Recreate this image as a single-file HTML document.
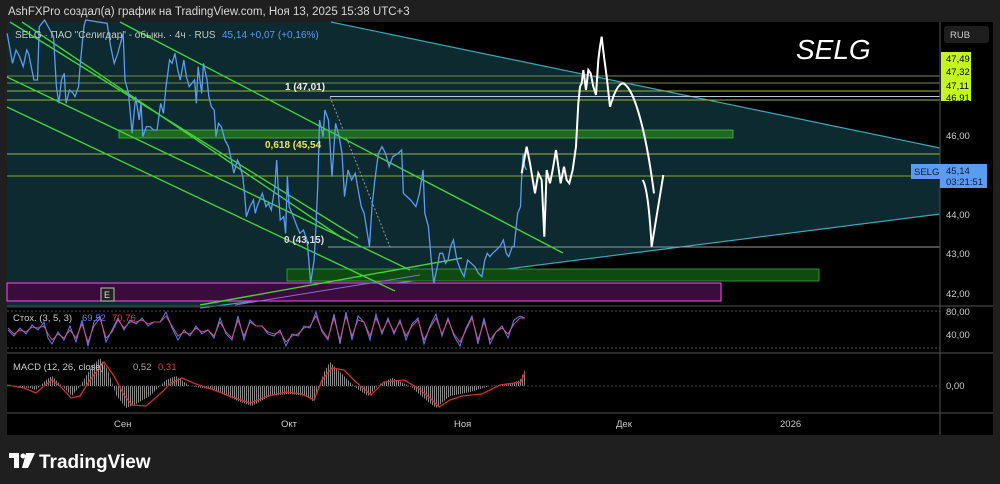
<!DOCTYPE html>
<html><head><meta charset="utf-8"><style>
html,body{margin:0;padding:0;background:#1f1f1f;width:1000px;height:484px;overflow:hidden;font-family:"Liberation Sans",sans-serif}
svg text{font-family:"Liberation Sans","DejaVu Sans",sans-serif}
</style></head><body>
<svg width="1000" height="484" viewBox="0 0 1000 484" xmlns="http://www.w3.org/2000/svg">
<rect width="1000" height="484" fill="#1f1f1f"/>
<text x="8" y="15" fill="#d8d8d8" font-size="11.5">AshFXPro создал(а) график на TradingView.com, Ноя 13, 2025 15:38 UTC+3</text>
<rect x="7" y="22" width="986" height="413" fill="#000"/>
<polygon points="7,22 331,22 940,148 940,214 200,308 7,308" fill="#0c2a2f"/>
<line x1="331" y1="22" x2="940" y2="148" stroke="#3aa7b8" stroke-width="1.2"/>
<line x1="200" y1="308" x2="940" y2="214" stroke="#3aa7b8" stroke-width="1.2"/>
<g stroke-width="1">
<line x1="7" y1="76" x2="940" y2="76" stroke="#7d8a4a"/>
<line x1="7" y1="83" x2="940" y2="83" stroke="#7d8a4a"/>
<line x1="7" y1="91" x2="940" y2="91" stroke="#9ab83a"/>
<line x1="330" y1="96.5" x2="940" y2="96.5" stroke="#b8c8d8"/>
<line x1="7" y1="100" x2="940" y2="100" stroke="#9ab83a"/>
<line x1="7" y1="154" x2="940" y2="154" stroke="#9ab83a"/>
<line x1="7" y1="176" x2="940" y2="176" stroke="#8aa83a"/>
<line x1="328" y1="247" x2="940" y2="247" stroke="#9a9a9a"/>
</g>
<line x1="330" y1="97" x2="390" y2="247" stroke="#999" stroke-dasharray="2,2"/>
<rect x="119" y="130" width="614" height="8" fill="#1f6a1f" stroke="#3fbf3f" stroke-width="0.8"/>
<rect x="287" y="269" width="532" height="12" fill="#0f4a10" stroke="#3aa83a" stroke-width="0.8"/>
<rect x="7" y="283" width="714" height="18" fill="#3a0c3c" stroke="#e040d8" stroke-width="1.2"/>
<rect x="101" y="288" width="13" height="13" fill="#222" stroke="#bbb" stroke-width="1"/>
<text x="104" y="298" fill="#ddd" font-size="9">E</text>
<g stroke="#44d238" stroke-width="1.4">
<line x1="120" y1="22" x2="563" y2="253"/>
<line x1="10" y1="22" x2="358" y2="238"/>
<line x1="22" y1="22" x2="345" y2="240"/>
<line x1="7" y1="77" x2="410" y2="270"/>
<line x1="7" y1="107" x2="395" y2="291"/>
<line x1="200" y1="305" x2="462" y2="258"/>
</g>
<line x1="235" y1="305" x2="420" y2="275" stroke="#8a6ad8" stroke-width="1"/>
<g transform="translate(0,20) scale(0.357,0.3333)">
<polyline fill="none" stroke="#5b9cf0" stroke-width="1.3" vector-effect="non-scaling-stroke" points="20,40 35,130 45,90 55,110 65,140 75,90 80,100 95,180 105,180 110,20 125,0 140,30 150,50 158,200 165,250 172,180 180,160 185,250 195,210 205,220 210,230 220,200 225,130 235,20 240,0 300,10 310,80 320,130 330,100 345,40 350,180 360,220 370,340 380,230 390,300 395,250 400,350 410,320 420,320 430,330 440,330 450,250 458,280 465,200 475,120 482,130 490,100 498,150 505,180 515,120 522,170 530,200 545,180 550,250 555,140 565,220 570,130 580,180 585,230 592,260 600,270 605,350 612,310 620,320 630,360 640,380 648,420 655,460 665,420 670,430 680,470 685,520 690,590 700,560 710,540 715,580 720,560 735,520 745,560 752,550 760,570 770,500 775,420 780,520 785,600 795,590 800,640 805,470 810,560 818,580 825,600 832,620 840,640 850,630 860,660 865,720 870,790 880,720 885,620 890,500 895,300 905,350 910,270 920,300 930,470 940,310 950,350 958,400 965,530 975,450 985,480 995,460 1005,520 1012,560 1020,580 1035,680 1042,560 1050,480 1060,400 1070,380 1080,400 1090,440 1100,410 1115,400 1125,390 1130,520 1140,530 1150,540 1165,560 1175,520 1185,450 1190,580 1200,620 1208,720 1215,790 1225,740 1232,700 1240,700 1248,730 1255,720 1262,680 1270,660 1280,720 1290,750 1300,770 1310,720 1320,730 1330,740 1340,760 1350,770 1358,720 1365,700 1372,710 1380,700 1390,690 1400,680 1410,660 1418,700 1425,710 1435,680 1440,680 1450,580 1458,560 1460,500 1465,400 1470,440 1475,450"/>
</g>
<g transform="translate(500,20) scale(0.3333)">
<path fill="none" stroke="#fff" stroke-width="2" vector-effect="non-scaling-stroke" d="M65,460 L80,380 L90,430 L105,520 L115,460 L125,480 L133,650 L140,450 L150,490 L158,450 L168,390 L175,440 L182,490 L192,440 L200,480 L208,490 L218,450 L228,380 L235,250 L240,200 L245,190 L250,150 L258,210 L265,150 L272,160 L280,200 L288,225 L295,120 L300,80 L305,50 L312,110 L320,170 L330,260 L340,230 Q355,190 370,190 Q390,200 410,260 Q440,350 462,520 M428,480 Q445,505 455,680 L490,465"/>
</g>
<text x="15" y="38" fill="#c8c8c8" font-size="10">SELG · ПАО "Селигдар" - обыкн. · 4ч · RUS</text>
<text x="222" y="38" fill="#5b9cf0" font-size="10">45,14  +0,07 (+0,16%)</text>
<text x="285" y="90" fill="#eee" font-size="10" font-weight="bold">1 (47,01)</text>
<text x="265" y="148" fill="#e8e84a" font-size="10" font-weight="bold">0,618 (45,54</text>
<text x="284" y="243" fill="#ddd" font-size="10" font-weight="bold">0 (43,15)</text>
<text x="796" y="59" fill="#fff" font-size="28" font-style="italic">SELG</text>
<g stroke="#444" stroke-width="1.2">
<line x1="7" y1="306" x2="993" y2="306"/>
<line x1="7" y1="353" x2="993" y2="353"/>
<line x1="7" y1="413" x2="993" y2="413"/>
<line x1="940" y1="22" x2="940" y2="435"/>
</g>
<line x1="7" y1="311" x2="940" y2="311" stroke="#555" stroke-dasharray="2,2"/>
<line x1="7" y1="348" x2="940" y2="348" stroke="#555" stroke-dasharray="2,2"/>
<polyline fill="none" stroke="#5b7cf0" stroke-width="1" points="8,330 14,336 20,328 26,334 32,325 38,330 44,322 48,338 52,344 58,332 64,340 70,326 76,342 82,320 88,346 94,322 100,316 106,342 112,330 118,318 124,330 130,320 136,324 142,318 148,326 154,322 160,322 166,312 172,328 178,340 184,330 190,336 196,326 202,334 208,330 214,338 220,318 226,334 232,340 238,316 244,340 250,320 256,326 262,326 268,334 274,336 280,330 286,346 292,334 298,336 304,326 310,328 316,312 322,332 328,340 334,314 340,344 346,312 352,340 358,316 364,322 370,340 376,314 382,334 388,318 394,334 400,320 406,340 412,324 418,318 424,344 430,326 436,314 442,336 448,318 454,336 460,346 466,328 472,316 478,344 484,318 490,344 496,332 502,326 508,338 514,320 520,316 525,318"/>
<polyline fill="none" stroke="#d0508a" stroke-width="1" points="8,328 14,334 20,330 26,332 32,327 38,328 44,326 48,334 52,340 58,334 64,338 70,330 76,338 82,324 88,342 94,326 100,318 106,338 112,332 118,320 124,328 130,322 136,322 142,320 148,324 154,322 160,322 166,316 172,326 178,336 184,332 190,334 196,328 202,332 208,330 214,336 220,322 226,332 232,338 238,320 244,336 250,322 256,326 262,326 268,332 274,334 280,332 286,342 292,336 298,334 304,328 310,326 316,316 322,330 328,338 334,318 340,340 346,316 352,336 358,320 364,322 370,336 376,318 382,332 388,320 394,332 400,322 406,336 412,326 418,320 424,340 430,328 436,318 442,334 448,320 454,334 460,342 466,330 472,318 478,340 484,322 490,340 496,332 502,328 508,334 514,324 520,318 525,318"/>
<text x="13" y="321" fill="#ccc" font-size="9.5">Стох. (3, 5, 3)</text>
<text x="82" y="321" fill="#5b7cf0" font-size="9.5">69,52</text>
<text x="112" y="321" fill="#e04040" font-size="9.5">70,76</text>
<defs><pattern id="hb" width="2" height="4" patternUnits="userSpaceOnUse"><rect width="1" height="4" fill="#8a8a8a"/></pattern></defs>
<path fill="url(#hb)" d="M7,386 L30,388 L36,390 L46,380 L52,376 L62,386 L72,396 L80,386 L92,366 L100,358 L108,370 L116,395 L126,408 L136,404 L150,396 L166,380 L176,376 L190,386 L214,390 L240,402 L252,406 L270,396 L290,394 L306,396 L314,402 L324,372 L330,362 L340,372 L356,388 L368,396 L380,384 L392,378 L410,386 L426,400 L436,408 L450,396 L470,392 L490,386 L510,384 L520,380 L525,370 L525,386 Z"/>
<polyline fill="none" stroke="#d03030" stroke-width="1.3" points="7,385 24,388 36,393 44,386 52,380 62,388 71,398 80,396 90,380 104,362 114,376 124,395 132,405 146,406 160,394 171,383 182,378 196,384 214,390 232,397 250,403 268,396 286,392 302,394 314,400 322,380 332,368 344,370 357,383 371,395 384,382 404,380 418,388 430,398 439,407 450,400 462,396 482,394 500,385 514,383 521,382 525,372"/>
<line x1="7" y1="386" x2="940" y2="386" stroke="#444" stroke-dasharray="2,2"/>
<text x="13" y="370" fill="#ccc" font-size="9.5">MACD (12, 26, close)</text>
<text x="133" y="370" fill="#aaa" font-size="9.5">0,52</text>
<text x="158" y="370" fill="#e04040" font-size="9.5">0,31</text>
<rect x="944" y="26" width="45" height="17" rx="3" fill="#1e1e1e"/>
<text x="950" y="38" fill="#ccc" font-size="9.5">RUB</text>
<rect x="941" y="52" width="30" height="49" fill="#c4f51e"/>
<g font-size="9.5" fill="#000">
<text x="946" y="62">47,49</text><text x="946" y="75">47,32</text><text x="946" y="89">47,11</text><text x="946" y="101">46,91</text>
</g>
<g font-size="9.5" fill="#ccc">
<text x="946" y="139">46,00</text><text x="946" y="218">44,00</text><text x="946" y="257">43,00</text><text x="946" y="297">42,00</text>
<text x="946" y="315">80,00</text><text x="946" y="338">40,00</text><text x="946" y="389">0,00</text>
</g>
<rect x="911" y="164" width="29" height="15" fill="#5b9cf0"/>
<text x="914" y="175" fill="#0a1a3a" font-size="9.5">SELG</text>
<rect x="940" y="164" width="47" height="24" fill="#5b9cf0"/>
<text x="946" y="174" fill="#0a1a3a" font-size="9.5">45,14</text>
<text x="946" y="185" fill="#0a1a3a" font-size="9.5">03:21:51</text>
<g font-size="9.5" fill="#ccc">
<text x="114" y="427">Сен</text><text x="281" y="427">Окт</text><text x="454" y="427">Ноя</text><text x="616" y="427">Дек</text><text x="780" y="427">2026</text>
</g>
<g fill="#fff">
<rect x="9" y="453" width="10" height="5"/><rect x="14" y="453" width="5" height="15"/>
<circle cx="23" cy="456" r="2.5"/>
<polygon points="26,453 35,453 28,468 22,468"/>
</g>
<text x="39" y="468" fill="#fff" font-size="19" font-weight="bold">TradingView</text>
</svg>
</body></html>
